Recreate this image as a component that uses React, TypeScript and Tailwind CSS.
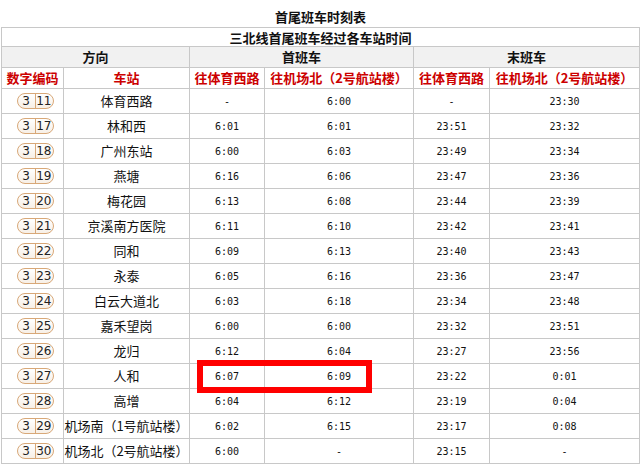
import React from "react";

const rows: [string, string, string, string, string, string][] = [
  ["11", "体育西路", "-", "6:00", "-", "23:30"],
  ["17", "林和西", "6:01", "6:01", "23:51", "23:32"],
  ["18", "广州东站", "6:00", "6:03", "23:49", "23:34"],
  ["19", "燕塘", "6:16", "6:06", "23:47", "23:36"],
  ["20", "梅花园", "6:13", "6:08", "23:44", "23:39"],
  ["21", "京溪南方医院", "6:11", "6:10", "23:42", "23:41"],
  ["22", "同和", "6:09", "6:13", "23:40", "23:43"],
  ["23", "永泰", "6:05", "6:16", "23:36", "23:47"],
  ["24", "白云大道北", "6:03", "6:18", "23:34", "23:48"],
  ["25", "嘉禾望岗", "6:00", "6:00", "23:32", "23:51"],
  ["26", "龙归", "6:12", "6:04", "23:27", "23:56"],
  ["27", "人和", "6:07", "6:09", "23:22", "0:01"],
  ["28", "高增", "6:04", "6:12", "23:19", "0:04"],
  ["29", "机场南（1号航站楼）", "6:02", "6:15", "23:17", "0:08"],
  ["30", "机场北（2号航站楼）", "6:00", "-", "23:15", "-"],
];

const cjk = { fontFamily: '"Noto Sans CJK SC", "Noto Sans", sans-serif' };
const mono = { fontFamily: '"DejaVu Sans Mono", "Liberation Mono", monospace' };

function Badge({ n }: { n: string }) {
  return (
    <div className="flex h-[16px] w-[37px] items-stretch overflow-hidden rounded-full border-[1.5px] border-[#d8a878] bg-gradient-to-b from-[#ffffff] to-[#f7efe6] text-[12px] leading-[13px] text-[#222]" style={{ fontFamily: '"DejaVu Sans", sans-serif' }}>
      <div className="flex w-[18px] items-center justify-center">3</div>
      <div className="w-[1.5px] bg-[#d8a878]" />
      <div className="flex flex-1 items-center justify-center pr-[1px]">{n}</div>
    </div>
  );
}

export default function App() {
  const td = "border border-[#c8c8c8] text-center p-0";
  const th = "border border-[#c8c8c8] text-center p-0 text-[13px] font-bold";
  return (
    <div className="relative h-[464px] w-[641px] overflow-hidden bg-white text-[#111]" style={cjk}>
      <div className="flex h-[27px] items-end justify-center pb-[1px] text-[13px] font-bold leading-[18px]">
        首尾班车时刻表
      </div>
      <table className="ml-[1px] w-[638px] table-fixed border-collapse">
        <colgroup>
          <col className="w-[62px]" />
          <col className="w-[126px]" />
          <col className="w-[75px]" />
          <col className="w-[149px]" />
          <col className="w-[76px]" />
          <col className="w-[150px]" />
        </colgroup>
        <tbody>
          <tr className="h-[19px]">
            <td colSpan={6} className={th + " leading-[17px]"}>三北线首尾班车经过各车站时间</td>
          </tr>
          <tr className="h-[21px] bg-[#f1f1f1]">
            <td colSpan={2} className={th}>方向</td>
            <td colSpan={2} className={th}>首班车</td>
            <td colSpan={2} className={th}>末班车</td>
          </tr>
          <tr className="h-[21px] text-[#cc0000]">
            <td className={th}>数字编码</td>
            <td className={th}>车站</td>
            <td className={th}>往体育西路</td>
            <td className={th}>往机场北（2号航站楼）</td>
            <td className={th}>往体育西路</td>
            <td className={th}>往机场北（2号航站楼）</td>
          </tr>
          {rows.map((r) => (
            <tr key={r[0]} className="h-[25px]">
              <td className={td}>
                <div className="flex justify-center pl-[5px]">
                  <Badge n={r[0]} />
                </div>
              </td>
              <td className={td + " text-[13px]"}>{r[1]}</td>
              <td className={td + " text-[10px]"} style={mono}>{r[2]}</td>
              <td className={td + " text-[10px]"} style={mono}>{r[3]}</td>
              <td className={td + " text-[10px]"} style={mono}>{r[4]}</td>
              <td className={td + " text-[10px]"} style={mono}>{r[5]}</td>
            </tr>
          ))}
        </tbody>
      </table>
      <div className="absolute left-[197px] top-[360px] h-[33px] w-[175px] border-[6px] border-[#ff0000]" />
    </div>
  );
}
